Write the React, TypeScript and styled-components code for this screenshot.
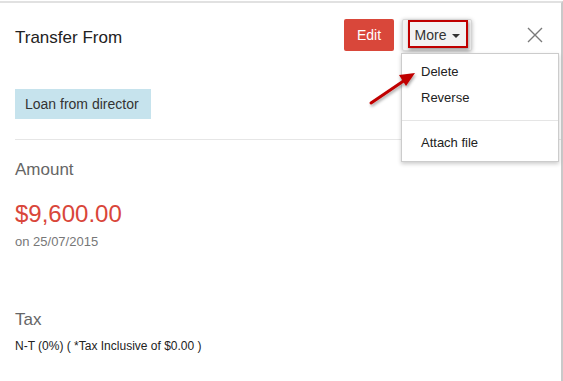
import { FC } from 'react';
import styled, { createGlobalStyle } from 'styled-components';

const GlobalStyle = createGlobalStyle`
  html, body {
    margin: 0;
    padding: 0;
    background: #ffffff;
  }
  body {
    font-family: 'Liberation Sans', Arial, sans-serif;
  }
`;

const menuItems = ['Delete', 'Reverse'];

const App: FC = () => {
  return (
    <StPage>
      <GlobalStyle />
      <StPanel>
        <StHeader>
          <StTitle>Transfer From</StTitle>
          <StActions>
            <StEditButton>Edit</StEditButton>
            <StMoreWrapper>
              <StMoreButton>
                More
                <StCaret />
              </StMoreButton>
              <StMenu>
                {menuItems.map((item) => (
                  <StMenuItem key={item}>{item}</StMenuItem>
                ))}
                <StMenuDivider />
                <StMenuItem>Attach file</StMenuItem>
              </StMenu>
              <StPointer width="60" height="46" viewBox="0 0 60 46">
                <defs>
                  <filter id="arrowShadow" x="-30%" y="-30%" width="160%" height="160%">
                    <feDropShadow dx="1" dy="2" stdDeviation="1.4" floodColor="#000" floodOpacity="0.35" />
                  </filter>
                </defs>
                <g filter="url(#arrowShadow)">
                  <line x1="6" y1="40" x2="40" y2="17" stroke="#c00000" strokeWidth="3" strokeLinecap="round" />
                  <polygon points="50,10 34,12 41,23" fill="#c00000" />
                </g>
              </StPointer>
            </StMoreWrapper>
            <StCloseButton aria-label="Close">
              <svg width="16" height="16" viewBox="0 0 16 16">
                <path d="M1 1 L15 15 M15 1 L1 15" stroke="#7a7a7a" strokeWidth="1.4" fill="none" />
              </svg>
            </StCloseButton>
          </StActions>
        </StHeader>

        <StBody>
          <StTag>Loan from director</StTag>
          <StDivider />

          <StSection>
            <StLabel>Amount</StLabel>
            <StAmount>$9,600.00</StAmount>
            <StDate>on 25/07/2015</StDate>
          </StSection>

          <StSection $gap={60}>
            <StLabel>Tax</StLabel>
            <StTaxText>N-T (0%) ( *Tax Inclusive of $0.00 )</StTaxText>
          </StSection>
        </StBody>
      </StPanel>
    </StPage>
  );
};

export default App;

const StPage = styled.div`
  width: 563px;
  height: 381px;
  padding-top: 1px;
  box-sizing: border-box;
  overflow: hidden;
`;

const StPanel = styled.div`
  width: 563px;
  height: 380px;
  box-sizing: border-box;
  border-top: 2px solid #e1e1e1;
  border-right: 2px solid #c9c9c9;
  background: #ffffff;
`;

const StHeader = styled.div`
  display: flex;
  align-items: center;
  padding: 16px 18px 0 15px;
`;

const StTitle = styled.div`
  flex: 1;
  margin-top: 5px;
  font-size: 17px;
  line-height: 1.15;
  color: #222222;
`;

const StActions = styled.div`
  display: flex;
  align-items: center;
`;

const StEditButton = styled.button`
  width: 50px;
  height: 32px;
  border: none;
  border-radius: 2px;
  background: #d9473a;
  color: #ffffff;
  font-family: inherit;
  font-size: 14px;
  padding: 0;
`;

const StMoreWrapper = styled.div`
  position: relative;
  margin-left: 8px;
`;

const StMoreButton = styled.button`
  position: relative;
  display: flex;
  align-items: center;
  justify-content: center;
  gap: 6px;
  width: 70px;
  height: 32px;
  border: 1px solid #d8d8d8;
  border-radius: 2px;
  background: #f3f3f3;
  box-shadow: 0 1px 4px rgba(0, 0, 0, 0.28);
  color: #333333;
  font-family: inherit;
  font-size: 14px;
  padding: 0 0 0 1px;

  &::after {
    content: '';
    position: absolute;
    left: 5px;
    top: 0;
    width: 60px;
    height: 28px;
    box-sizing: border-box;
    border: 2px solid #c00000;
    box-shadow: 1px 2px 3px rgba(0, 0, 0, 0.35);
  }
`;

const StCaret = styled.span`
  width: 0;
  height: 0;
  border-left: 4px solid transparent;
  border-right: 4px solid transparent;
  border-top: 4px solid #333333;
  margin-top: 2px;
`;

const StMenu = styled.div`
  position: absolute;
  left: -1px;
  top: 34px;
  width: 158px;
  box-sizing: border-box;
  padding: 5px 0 5px;
  background: #ffffff;
  border: 1px solid #cccccc;
  box-shadow: 0 2px 4px rgba(0, 0, 0, 0.2);
  z-index: 2;
`;

const StMenuItem = styled.div`
  height: 26px;
  line-height: 26px;
  padding: 0 19px;
  font-size: 13px;
  color: #222222;
`;

const StMenuDivider = styled.div`
  height: 1px;
  margin: 9px 0;
  background: #e5e5e5;
`;

const StPointer = styled.svg`
  position: absolute;
  left: -37px;
  top: 44px;
  z-index: 3;
  overflow: visible;
`;

const StCloseButton = styled.button`
  display: flex;
  align-items: center;
  justify-content: center;
  width: 16px;
  height: 16px;
  margin-left: 55px;
  padding: 0;
  border: none;
  background: none;
`;

const StBody = styled.div`
  display: flex;
  flex-direction: column;
  align-items: flex-start;
  padding: 38px 0 0 15px;
`;

const StTag = styled.div`
  height: 30px;
  line-height: 30px;
  padding: 0 12px 0 10px;
  background: #c6e3ed;
  color: #333333;
  font-size: 14px;
`;

const StDivider = styled.div`
  align-self: stretch;
  height: 1px;
  margin-top: 20px;
  background: #e6e6e6;
`;

const StSection = styled.div<{ $gap?: number }>`
  display: flex;
  flex-direction: column;
  margin-top: ${({ $gap }) => $gap ?? 20}px;
`;

const StLabel = styled.div`
  font-size: 17px;
  line-height: 1.15;
  color: #666666;
`;

const StAmount = styled.div`
  margin-top: 20px;
  font-size: 24px;
  line-height: 1.15;
  color: #d9463a;
`;

const StDate = styled.div`
  margin-top: 8px;
  font-size: 13px;
  line-height: 1.15;
  color: #777777;
`;

const StTaxText = styled.div`
  margin-top: 10px;
  font-size: 12px;
  line-height: 1.15;
  color: #222222;
`;
